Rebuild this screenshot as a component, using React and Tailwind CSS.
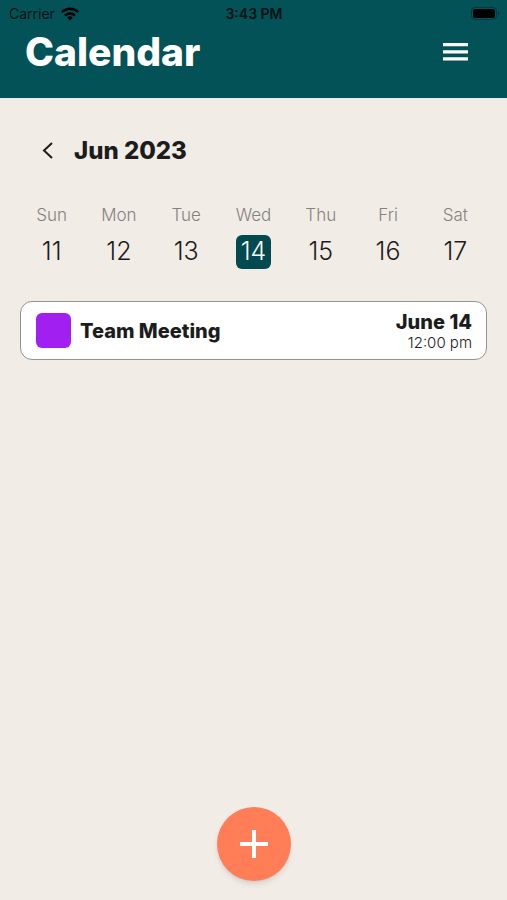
// Calendar — week view with the day's events and an add button.

import { useState } from 'react';

const DAYS = [
  { name: 'Sun', date: 11 },
  { name: 'Mon', date: 12 },
  { name: 'Tue', date: 13 },
  { name: 'Wed', date: 14 },
  { name: 'Thu', date: 15 },
  { name: 'Fri', date: 16 },
  { name: 'Sat', date: 17 },
];

const EVENTS = [{ id: 1, title: 'Team Meeting', date: 'June 14', time: '12:00 pm' }];

function StatusBar() {
  return (
    <div className="grid h-7 grid-cols-3 items-center pr-2 pl-[9px] text-sm text-[#001214]">
      <div className="flex items-center gap-1.5">
        <span>Carrier</span>
        <svg viewBox="0 0 18 14" className="h-3.5 w-[18px]" aria-hidden="true">
          <g fill="none" stroke="#000" strokeWidth="2.5">
            <path d="M.9 5.1a11.6 11.6 0 0 1 16.2 0" />
            <path d="M4 8.6a7.2 7.2 0 0 1 10 0" />
          </g>
          <path d="M9 13.5 6.2 10.7a4 4 0 0 1 5.6 0Z" fill="#000" />
        </svg>
      </div>
      <span className="text-center font-semibold">3:43 PM</span>
      <svg viewBox="0 0 28 14" className="h-3.5 w-7 justify-self-end" aria-hidden="true">
        <rect x="0.5" y="0.5" width="25" height="12" rx="3.5" fill="none" stroke="currentColor" opacity="0.35" />
        <rect x="2" y="2" width="22" height="9" rx="2" fill="#000" />
        <path d="M27 4.5v4a2.2 2.2 0 0 0 0-4Z" fill="currentColor" opacity="0.4" />
      </svg>
    </div>
  );
}

function Header() {
  return (
    <header className="bg-[#025257] pb-[22px]">
      <StatusBar />
      <div className="flex h-12 items-center justify-between pr-[34px] pl-[25px]">
        <h1 className="text-[39px] leading-12 font-extrabold text-white">Calendar</h1>
        <button aria-label="Menu" className="text-white">
          <svg viewBox="0 0 36 36" className="size-9" fill="currentColor" aria-hidden="true">
            <path d="M6 9h25v3.2H6zM6 16.2h25v3.2H6zM6 23.2h25v3.2H6z" />
          </svg>
        </button>
      </div>
    </header>
  );
}

function EventCard({ event }) {
  return (
    <li className="flex items-center rounded-xl border border-[#96938f] bg-white py-2 pr-[14px] pl-[15px]">
      <span className="mr-[9px] size-[35px] rounded-md bg-[#a11ff0]" />
      <h3 className="text-xl font-extrabold">{event.title}</h3>
      <div className="ml-auto text-right">
        <p className="text-xl leading-6 font-extrabold">{event.date}</p>
        <p className="text-[15px] leading-[17px] font-light">{event.time}</p>
      </div>
    </li>
  );
}

export default function App() {
  const [selected, setSelected] = useState(14);

  return (
    <div className="flex min-h-screen flex-col bg-[#f1ece6] font-['Inter',sans-serif] text-[#1c1c1c]">
      <Header />

      <main className="flex-1">
        <div className="flex h-[105px] items-center gap-4 pl-9">
          <button aria-label="Previous week">
            <svg viewBox="0 0 22 22" className="size-[22px]" fill="none" stroke="currentColor" strokeWidth="2" aria-hidden="true">
              <path d="m16 3-8 7.5 8 7.5" />
            </svg>
          </button>
          <h2 className="text-2xl font-extrabold">Jun 2023</h2>
        </div>

        <div className="grid grid-cols-7 px-[18px]">
          {DAYS.map((day) => (
            <button
              key={day.date}
              onClick={() => setSelected(day.date)}
              aria-pressed={selected === day.date}
              className="flex flex-col items-center gap-2"
            >
              <span className="text-[17px] leading-6 font-light text-[#85827e]">{day.name}</span>
              <span
                className={`flex h-[34px] w-[35px] items-center justify-center rounded-md text-[25px] font-light ${
                  selected === day.date ? 'bg-[#024a4f] text-white' : ''
                }`}
              >
                {day.date}
              </span>
            </button>
          ))}
        </div>

        <ul className="mt-8 px-5">
          {EVENTS.map((event) => (
            <EventCard key={event.id} event={event} />
          ))}
        </ul>
      </main>

      <footer className="flex justify-center pb-[19px]">
        <button
          aria-label="Add event"
          className="flex size-[74px] items-center justify-center rounded-full bg-[#ff7d57] text-white shadow-md"
        >
          <svg viewBox="0 0 30 30" className="size-[30px]" fill="none" stroke="currentColor" strokeWidth="4" aria-hidden="true">
            <path d="M15 1v28M1 15h28" />
          </svg>
        </button>
      </footer>
    </div>
  );
}
